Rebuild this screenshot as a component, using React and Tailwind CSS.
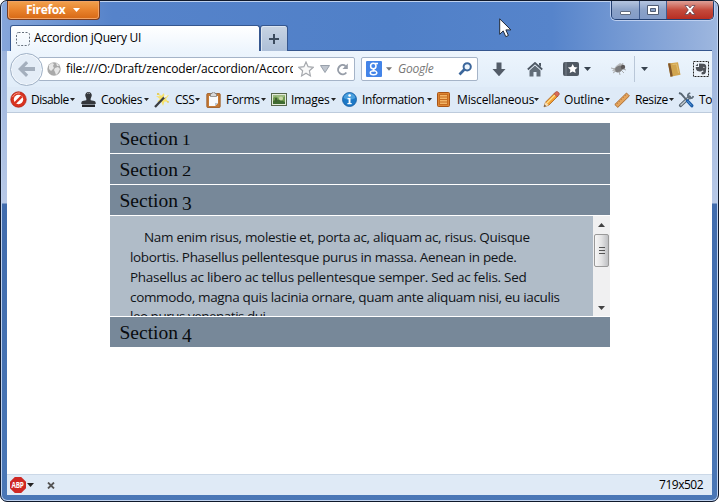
import React from 'react';

function Caret({ className = '' }) {
  return <svg className={className} width="7" height="4" viewBox="0 0 7 4"><path d="M0 0h7L3.5 4z" fill="currentColor" /></svg>;
}

function Disable() {
  return (
    <svg width="17" height="17" viewBox="0 0 17 17">
      <circle cx="8.5" cy="8.5" r="7.7" fill="#d9331f" stroke="#b52012" strokeWidth=".8" />
      <circle cx="8.5" cy="8.5" r="4.7" fill="#fff" />
      <path d="M4.2 11.2l6.600-6.600 1.800 1.600-6.600 6.600z" fill="#d9331f" />
      <path d="M2.5 6Q5 1.5 10 2" stroke="#f59a88" strokeWidth="1" fill="none" />
    </svg>
  );
}
function Stamp() {
  return (
    <svg width="15" height="15" viewBox="0 0 15 15">
      <path d="M7.5 0a3.2 3.2 0 0 1 3 4.4C9.6 6.200 9.500 7 9.700 8.200l3.800.9q1.200.4 1.200 2V12H.3v-.9q0-1.600 1.200-2l3.800-.9C5.500 7 5.400 6.200 4.500 4.400A3.200 3.200 0 0 1 7.500 0z" fill="#34373b" />
      <path d="M1 12.500h13V15H1z" fill="#25272a" />
      <path d="M6 1.600q1.500-1 3 0" stroke="#8b8e92" fill="none" />
    </svg>
  );
}
function Wand() {
  return (
    <svg width="16" height="16" viewBox="0 0 16 16">
      <path d="M5 1l2 3 3-3 .5 3.500L15 3l-3 4 2.500 3-4-.5L9 14 7.500 10 3 9.500 6 7 2 4l3.500.3z" fill="#f7e26b" />
      <path d="M1 15L11 4.500" stroke="#3a3d42" strokeWidth="2.300" />
      <path d="M10 5.500L12.500 3" stroke="#f5f5e8" strokeWidth="2.300" />
      <path d="M4 1v2M14 9v2M3 2h2" stroke="#e6c531" />
    </svg>
  );
}
function Clipboard() {
  return (
    <svg width="15" height="16" viewBox="0 0 15 16">
      <rect x=".8" y="1.500" width="13.400" height="14" rx="1" fill="#c47a36" stroke="#99551d" strokeWidth=".8" />
      <path d="M3 4h9v7l-3 3H3z" fill="#f8fafc" />
      <path d="M12 11l-3 3v-3z" fill="#b9c7d5" />
      <path d="M4.500 1.500h1.500a1.500 1.500 0 0 1 3 0h1.500V4.500h-6z" fill="#d8d9da" stroke="#777" strokeWidth=".7" />
    </svg>
  );
}
function Picture() {
  return (
    <svg width="16" height="13" viewBox="0 0 16 13">
      <rect x=".5" y=".5" width="15" height="12" fill="#e3ead9" stroke="#55664b" />
      <rect x="2" y="2" width="12" height="9" fill="#6f9a4c" />
      <path d="M2 5q3-3 5 0t7-2V2H2z" fill="#9cba80" />
      <path d="M2 11V8q5-3 12 1v2z" fill="#3f6c31" />
      <circle cx="10" cy="5.500" r="2" fill="#c9d7a6" />
      <path d="M5 5v4" stroke="#426033" strokeWidth="2" />
    </svg>
  );
}
function Info() {
  return (
    <svg width="15" height="15" viewBox="0 0 15 15">
      <circle cx="7.500" cy="7.500" r="7" fill="#1c78c6" stroke="#145b9f" strokeWidth=".8" />
      <path d="M1.500 6A6.200 6.200 0 0 1 13.500 6Q7.500 9 1.500 6z" fill="#4ba0de" />
      <circle cx="7.600" cy="3.500" r="1.300" fill="#fff" />
      <path d="M5.500 6h3v5h1.200v1.300H5.400V11h1.200V7.300H5.500z" fill="#fff" />
    </svg>
  );
}
function Book() {
  return (
    <svg width="13" height="15" viewBox="0 0 13 15">
      <rect x=".5" y=".5" width="12" height="14" rx="1" fill="#dd8532" stroke="#a85416" />
      <rect x="2.500" y="2.500" width="8" height="10" fill="#f3b567" stroke="#c66d21" />
      <path d="M3 5h7M3 7.500h7M3 10h7" stroke="#c66d21" />
    </svg>
  );
}
function Pencil() {
  return (
    <svg width="17" height="17" viewBox="0 0 17 17">
      <path d="M1 15.800l1.600-4.700L12 1.700l3.200 3.100-9.400 9.400z" fill="#f1a034" stroke="#a85c15" strokeWidth=".8" />
      <path d="M4 12L13 3" stroke="#ffe08a" strokeWidth="1.200" />
      <path d="M11 2.700L13 .8q1-.8 2.200.3l.8.9q.9 1-.1 2L14 5.800z" fill="#d96a57" stroke="#9b4838" strokeWidth=".6" />
      <path d="M1 15.800l1.600-4.700 3.200 3.100z" fill="#f6dfb7" />
      <path d="M1 15.800l.7-2 1.300 1.300z" fill="#333" />
    </svg>
  );
}
function Ruler() {
  return (
    <svg width="16" height="16" viewBox="0 0 16 16">
      <path d="M.8 12.500L12.500 1l2.900 2.900L3.800 15.400z" fill="#e3a45d" stroke="#a86629" strokeWidth=".9" />
      <path d="M3 11l1 1M5 9l1 1M7 7l1 1M9 5l1 1M11 3l1 1" stroke="#bd7937" strokeWidth=".7" />
    </svg>
  );
}
function Tools() {
  return (
    <svg width="16" height="16" viewBox="0 0 16 16" fill="none">
      <path d="M2.500 13.500L11.500 5" stroke="#53616e" strokeWidth="3.200" strokeLinecap="round" />
      <path d="M2.500 13.500L11.500 5" stroke="#c3ccd4" strokeWidth="1.500" />
      <path d="M12.300 1q-2.800.7-2.300 3t2.500 2.300 2.900-2.200" stroke="#63727f" strokeWidth="1.800" />
      <path d="M1 1l2.200.8L9 8.500" stroke="#586672" strokeWidth="1.900" />
      <path d="M9.500 9l4.300 4.700" stroke="#1b5ca7" strokeWidth="3.200" strokeLinecap="round" />
      <path d="M9.500 9l4 4.400" stroke="#64a1df" strokeWidth="1" />
    </svg>
  );
}

const tools = [
  { label: 'Disable', Icon: Disable, cell: 'w-[71px]', icon: 'w-[21px]', text: 'w-[39px] tracking-[-0.5px]' },
  { label: 'Cookies', Icon: Stamp, cell: 'w-[73px]', icon: 'w-[20px]', text: 'w-[43px] tracking-[-0.4px]' },
  { label: 'CSS', Icon: Wand, cell: 'w-[52px]', icon: 'w-[21px]', text: 'w-[20px] tracking-[-0.5px]' },
  { label: 'Forms', Icon: Clipboard, cell: 'w-[65px]', icon: 'w-[20px]', text: 'w-[35px] tracking-[-0.3px]' },
  { label: 'Images', Icon: Picture, cell: 'w-[71px]', icon: 'w-[20px]', text: 'w-[40px] tracking-[-0.3px]' },
  { label: 'Information', Icon: Info, cell: 'w-[95px]', icon: 'w-[20px]', text: 'w-[65px] tracking-[-0.4px]' },
  { label: 'Miscellaneous', Icon: Book, cell: 'w-[106px]', icon: 'w-[20px]', text: 'w-[77px] tracking-[-0.15px]' },
  { label: 'Outline', Icon: Pencil, cell: 'w-[71px]', icon: 'w-[21px]', text: 'w-[41px] tracking-[-0.2px]' },
  { label: 'Resize', Icon: Ruler, cell: 'w-[64px]', icon: 'w-[21px]', text: 'w-[34px] tracking-[-0.4px]' },
  { label: 'Tools', Icon: Tools, cell: 'w-[60px]', icon: 'w-[21px]', text: 'w-[30px] tracking-[-0.3px]' },
];

function TitleBar() {
  return (
    <header className="flex h-[50px] shrink-0 flex-col">
      <div className="flex h-[22px] items-start">
        <button className="flex h-[19px] w-[93px] shrink-0 items-center rounded-b-[4px] border border-t-0 border-[#773d22] bg-linear-to-b from-[#f0a24f] via-[#e9832c] to-[#d66814] pl-[18px] text-[12px] font-bold text-white shadow-[inset_0_0_0_1px_#f2a365]">
          <span className="w-[47px] text-left tracking-[-0.35px]">Firefox</span><Caret />
        </button>
        <div className="ml-[511px] flex h-[19px] shrink-0 overflow-hidden rounded-b-[5px] border border-t-0 border-[#223f70] shadow-[0_0_0_1px_#bdcff0]">
          <div className="flex w-[28px] items-center justify-center border-r border-[#405d91] bg-linear-to-b from-[#b5c5df] via-[#8ba2c8] to-[#829bc7] pt-[6px]"><div className="h-[4px] w-[11px] rounded-[1px] border border-[#5f6b80] bg-white" /></div>
          <div className="flex w-[27px] items-center justify-center border-r border-[#405d91] bg-linear-to-b from-[#b5c5df] via-[#8ba2c8] to-[#829bc7]"><svg width="12" height="10" viewBox="0 0 12 10"><path d="M.5.5h11v9H.5z" fill="#fff" stroke="#505d74" /><path d="M3.500 3.500h5v3h-5z" fill="#8ba2c8" stroke="#505d74" /></svg></div>
          <div className="flex w-[46px] items-center justify-center bg-linear-to-b from-[#dda098] via-[#c44a3c] to-[#b72d22]"><svg width="12" height="10" viewBox="0 0 12 10"><path d="M1 .5h3L6 3 8 .5h3L7.700 4.900 11 9.500H8L6 7 4 9.500H1l3.300-4.600z" fill="#fff" stroke="#574050" strokeWidth=".7" /></svg></div>
        </div>
      </div>
      <div className="flex h-[28px] items-end pl-[3px]">
        <div className="flex h-[26px] w-[250px] items-center rounded-t-[3px] border border-b-0 border-[#36578f] bg-linear-to-b from-white to-[#edf5fd] pl-[5px] text-[12px] text-black">
          <svg width="14" height="14" viewBox="0 0 14 14"><rect x=".5" y=".5" width="13" height="13" rx="2" fill="none" stroke="#66717d" strokeDasharray="2 1.500" /></svg>
          <span className="ml-[4px] -mt-px tracking-[-0.25px]">Accordion jQuery UI</span>
        </div>
        <div className="flex h-[26px] w-[28px] items-center justify-center rounded-t-[3px] border border-b-0 border-[#36578f] bg-linear-to-b from-[#c8d4e3] to-[#adbfd8] shadow-[inset_1px_1px_0_#dce5f0]"><svg width="10" height="10" viewBox="0 0 10 10"><path d="M5 0v10M0 5h10" stroke="#3c4b5e" strokeWidth="2" /></svg></div>
        <div className="h-px flex-1 bg-[#36578f]" />
      </div>
    </header>
  );
}

function NavBar() {
  return (
    <nav className="flex h-[36px] shrink-0 items-center overflow-hidden bg-linear-to-b from-[#edf5fd] to-[#e1edf9] pl-[3px]">
      <div className="z-10 flex size-[33px] shrink-0 items-center justify-center rounded-full border border-[#9fb0c5] bg-[#e4edf7] shadow-[inset_0_0_0_1px_#f5f9fd]">
        <svg width="17" height="16" viewBox="0 0 17 16"><path d="M8 0L0 8l8 8 2.200-2.300L6.500 10H17V6H6.500l3.700-3.700z" fill="#a4afbd" /></svg>
      </div>
      <div className="-ml-[5px] flex h-[24px] w-[317px] shrink-0 items-center rounded-[2px] border border-[#a5b4c8] bg-white pl-[8px]">
        <svg width="14" height="14" viewBox="0 0 14 14"><circle cx="7" cy="7" r="6.700" fill="#a9a9a9" /><path d="M2 3l3-2 2 1-1 2 1 2-3 3-2-2zM8 6l3-1 2 2-2 4-2 2-1-3-1-2zM9 1l2 1 1 2-2 0z" fill="#e7e7e7" /></svg>
        <span className="ml-[5px] w-[227px] overflow-hidden text-[12px] whitespace-nowrap text-black tracking-[-0.16px]">file:///O:/Draft/zencoder/accordion/Accordion.html</span>
        <svg className="ml-[5px] shrink-0" width="16" height="16" viewBox="0 0 16 16"><path d="M8 1l2.100 4.700 5.100.6-3.800 3.500 1 5.100L8 12.300l-4.400 2.600 1-5.100L.8 6.300l5.100-.6z" fill="#f9f9f9" stroke="#a5a8ad" strokeWidth="1.200" /></svg>
        <svg className="ml-[6px] shrink-0" width="10" height="8" viewBox="0 0 10 8"><path d="M.5.500h9L5 7.500z" fill="#bfc5ce" stroke="#98a0ab" /></svg>
        <svg className="ml-[6px] shrink-0" width="13" height="13" viewBox="0 0 13 13"><path d="M10.300 9.500A4.600 4.600 0 1 1 9.500 3" fill="none" stroke="#969da8" strokeWidth="2" /><path d="M11.800.500v5.500H6.500z" fill="#969da8" /></svg>
      </div>
      <div className="ml-[6px] flex h-[24px] w-[117px] shrink-0 items-center rounded-[2px] border border-[#a5b4c8] bg-white pl-[4px]">
        <div className="flex size-[16px] items-center justify-center rounded-[1px] bg-[#4384e8]"><svg width="12" height="14" viewBox="0 0 12 14" fill="none" stroke="#fff" strokeWidth="1.500"><ellipse cx="5.300" cy="4" rx="2.700" ry="2.800" /><path d="M7 1.500h3M6.500 6.800Q4 8 6.500 9M5.300 8.500q4 .6 3.500 2.800c-.7 2.300-6.500 2-6.500-.5 0-1.800 2.500-2 4-2" /></svg></div>
        <Caret className="ml-[4px] w-[6px] text-[#777]" />
        <span className="ml-[6px] w-[60px] text-[12px] text-[#777] italic tracking-[-0.25px]">Google</span>
        <svg width="15" height="14" viewBox="0 0 15 14"><circle cx="9.200" cy="4.800" r="3.600" fill="#edf5fc" stroke="#3b669b" strokeWidth="2" /><path d="M6.300 7.500L1.500 12.500" stroke="#3b669b" strokeWidth="2.600" /></svg>
      </div>
      <svg className="ml-[14px] shrink-0" width="14" height="15" viewBox="0 0 14 15"><path d="M4.500.500h5V7h4L7 14.300.500 7h4z" fill="#535c68" /></svg>
      <svg className="ml-[21px] shrink-0" width="16" height="15" viewBox="0 0 16 15"><path d="M.8 7.500L8 1l7.200 6.500" fill="none" stroke="#4e5864" strokeWidth="1.800" /><path d="M2.500 8.500L8 3.500l5.500 5V14.500h-4V10h-3v4.500h-4z" fill="#626d78" /><path d="M12 1h2v4l-2-1.700z" fill="#4e5864" /></svg>
      <svg className="ml-[20px] shrink-0" width="16" height="14" viewBox="0 0 16 14"><rect width="16" height="14" rx="2" fill="#505963" /><path d="M3 0v14" stroke="#8a949f" strokeWidth=".7" /><path d="M9.700 2l1.500 3.100 3.300.4-2.500 2.300.7 3.300-3-1.600-3 1.600.7-3.300-2.500-2.300 3.300-.4z" fill="#fff" /></svg>
      <Caret className="ml-[5px] shrink-0 text-[#38434f]" />
      <svg className="ml-[20px] shrink-0" width="16" height="14" viewBox="0 0 16 14"><path d="M1 9q3-3 4-5l4-3 4 2-2 4-5 3z" fill="#b9bbbd" /><ellipse cx="8" cy="7" rx="4" ry="3" transform="rotate(-28 8 7)" fill="#7c7c7d" /><circle cx="12" cy="5" r="2.200" fill="#5c5858" /><path d="M4 7L0 6M5 9l-3 2M8 9l1 4M10 8l3 3M12 7l3 1M11 3l1-2" stroke="#999" strokeWidth=".8" /></svg>
      <div className="ml-[7px] h-[26px] w-px shrink-0 bg-[#b9c7d8]" />
      <Caret className="ml-[6px] shrink-0 text-[#38434f]" />
      <svg className="ml-[19px] shrink-0" width="14" height="15" viewBox="0 0 14 15"><path d="M1 1.500l10-1.200 2.500 12.500-10 1.900z" fill="#d1a54f" /><path d="M1 1.500l2.300-.3L5.800 14.200l-2.300.5z" fill="#80552a" /><path d="M5.500 2.500l4-.5 2 9" fill="none" stroke="#e3bf73" /></svg>
      <svg className="ml-[12px] shrink-0" width="16" height="16" viewBox="0 0 16 16"><rect x=".5" y=".5" width="15" height="15" fill="#edf3fa" stroke="#222" strokeDasharray="2 1" /><path d="M6 2.500l4 .3q3.300-.2 3.300 3.700l-.5 5q-.6 2.300-4.100 1.800-1-2.300 1.700-2.600.2-1.500-1-1.200-1.200 1.700-3.700.8Q2.700 10 2.700 6H6z" fill="#4d5158" /><path d="M2.500 5L5 2.500V5z" fill="#4d5158" /><circle cx="10.900" cy="6.300" r=".6" fill="#fff" /></svg>
    </nav>
  );
}

function ExtensionBar() {
  return (
    <div className="flex h-[26px] shrink-0 items-center overflow-hidden border-b border-[#bdcbdc] bg-[#deeaf7] pl-[3px] text-[12px] text-black">
      {tools.map(({ label, Icon, cell, icon, text }) => (
        <div key={label} className={`flex shrink-0 items-center ${cell}`}>
          <span className={`shrink-0 ${icon}`}><Icon /></span>
          <span className={`shrink-0 whitespace-nowrap ${text}`}>{label}</span>
          <svg className="shrink-0" width="5" height="3" viewBox="0 0 5 3"><path d="M0 0h5L2.500 3z" fill="#222" /></svg>
        </div>
      ))}
    </div>
  );
}

function SectionHeader({ number, digit }) {
  return (
    <h3 className="flex h-[30px] items-center bg-[#778899] pl-[9.500px] font-['Liberation_Serif',serif] text-[19.500px] text-[#080b0e]">
      <span className="pt-[2px]">Section<span className={`ml-[4px] inline-block leading-none ${digit}`}>{number}</span></span>
    </h3>
  );
}

function Scrollbar() {
  return (
    <div className="flex w-[17px] shrink-0 flex-col items-center bg-[#f0f0f1]">
      <svg className="mt-[7px]" width="7" height="4" viewBox="0 0 7 4"><path d="M0 4h7L3.500 0z" fill="#424242" /></svg>
      <div className="mt-[7px] flex h-[33px] w-[15px] flex-col items-center justify-center gap-[2px] rounded-[2px] border border-[#999] bg-linear-to-r from-[#f7f7f7] via-[#e3e3e4] to-[#bfc0c3]">
        <i className="h-px w-[6px] bg-[#555]" /><i className="h-px w-[6px] bg-[#555]" /><i className="h-px w-[6px] bg-[#555]" />
      </div>
      <Caret className="mt-auto mb-[6px] text-[#424242]" />
    </div>
  );
}

export default function App() {
  return (
    <div className="relative flex h-[502px] w-[719px] flex-col overflow-hidden rounded-[7px] border border-[#10192b] bg-[linear-gradient(to_bottom,#93add9_0px,#b8c9e7_202px,#416cad_203px,#4a77b6_100%)] px-[6px] pb-[6px] font-['Open_Sans','Noto_Sans',sans-serif] shadow-[inset_0_0_0_1px_#bfd2ef]">
      <div className="absolute inset-x-px top-px h-[49px] rounded-t-[5px] bg-[linear-gradient(to_right,#86a6da_0px,#5683ca_110px,#5080c8_390px,#5684cb_550px,#8eabda_680px,#9eb7df_100%)]" />
      <div className="relative flex min-h-0 flex-1 flex-col">
        <TitleBar />
        <NavBar />
        <ExtensionBar />
        <main className="min-h-0 flex-1 bg-white pt-[10px] pl-[103px]">
          <div className="flex w-[500px] flex-col gap-px">
            <SectionHeader number="1" digit="origin-bottom-left scale-x-[1.1] text-[15.500px]" />
            <SectionHeader number="2" digit="origin-bottom-left scale-x-[1.2] text-[15.500px]" />
            <SectionHeader number="3" digit="translate-y-[3px]" />
            <div className="flex h-[100px] overflow-hidden bg-[#b0bcc8]">
              <div className="flex-1 overflow-hidden pt-[11px] pl-[20px] text-[13.500px] leading-[20px] whitespace-nowrap text-[#101418]">
                <p className="pl-[14px] tracking-[-0.32px]">Nam enim risus, molestie et, porta ac, aliquam ac, risus. Quisque</p>
                <p className="tracking-[-0.33px]">lobortis. Phasellus pellentesque purus in massa. Aenean in pede.</p>
                <p className="tracking-[-0.27px]">Phasellus ac libero ac tellus pellentesque semper. Sed ac felis. Sed</p>
                <p className="tracking-[-0.34px]">commodo, magna quis lacinia ornare, quam ante aliquam nisi, eu iaculis</p>
                <p className="-mt-px tracking-[-0.5px]">leo purus venenatis dui.</p>
              </div>
              <Scrollbar />
            </div>
            <SectionHeader number="4" digit="translate-y-[3px]" />
          </div>
        </main>
        <footer className="flex h-[21px] shrink-0 items-center border-t border-[#cbd8e7] bg-[#dfeaf6] pr-[9px] pl-[3px] text-[12px] text-black">
          <div className="flex size-[16px] items-center justify-center bg-[#cf2824] [clip-path:polygon(30%_0,70%_0,100%_30%,100%_70%,70%_100%,30%_100%,0_70%,0_30%)]"><span className="scale-x-[0.8] text-[8px] leading-none font-bold text-white tracking-[-0.3px]">ABP</span></div>
          <Caret className="ml-px text-[#222]" />
          <svg className="ml-[13px]" width="8" height="7" viewBox="0 0 8 7"><path d="M1 .5l6 6M7 .5l-6 6" stroke="#555" strokeWidth="1.800" /></svg>
          <span className="ml-auto tracking-[-0.5px]">719x502</span>
        </footer>
      </div>
      <svg className="absolute top-[17px] left-[498px]" width="13" height="20" viewBox="0 0 13 20"><path d="M.7.8v15.500l3.500-3.400 2.600 5.800 2.600-1.200-2.500-5.600h5z" fill="#fff" stroke="#222a38" /></svg>
    </div>
  );
}
